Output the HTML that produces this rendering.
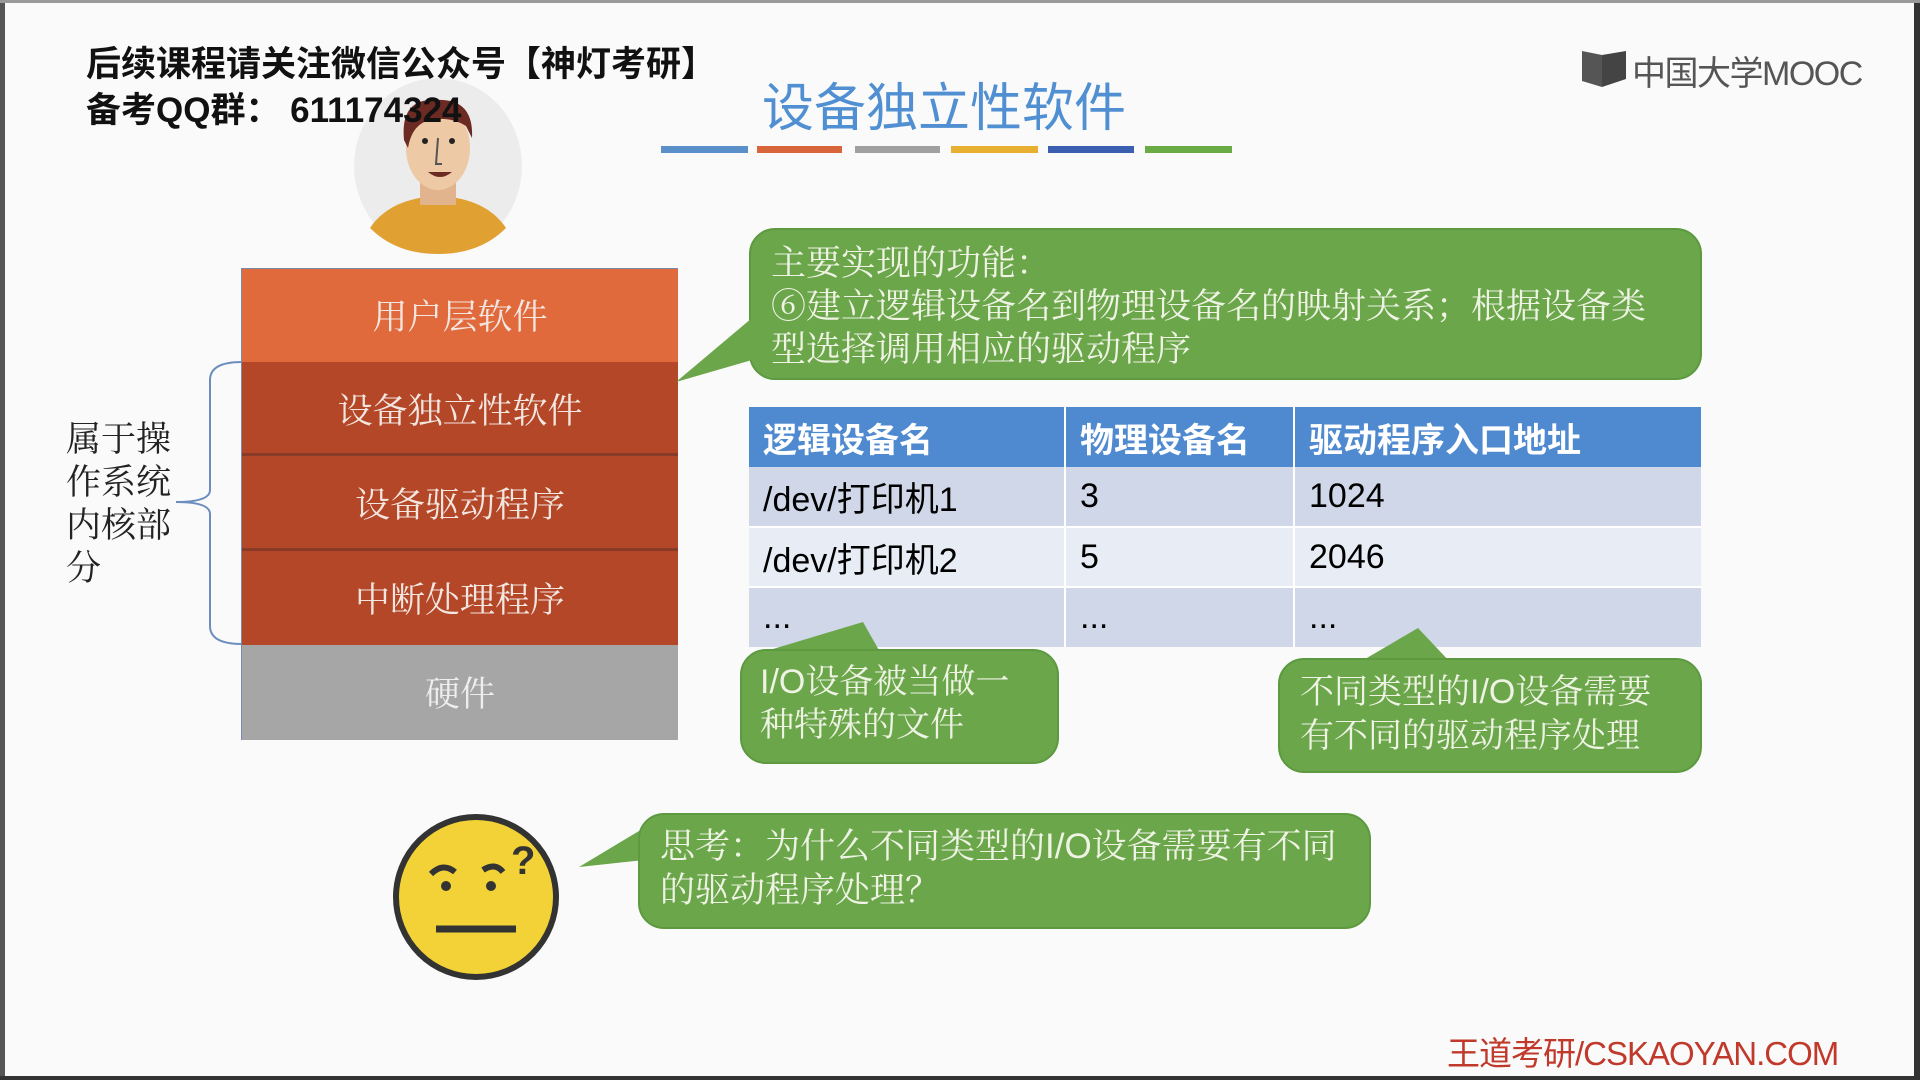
<!DOCTYPE html>
<html><head><meta charset="utf-8"><style>
*{margin:0;padding:0;box-sizing:border-box}
body{width:1920px;height:1080px;overflow:hidden;background:#fafafa;position:relative;font-family:"Liberation Sans","Noto Sans CJK SC",sans-serif}
.a{position:absolute}
.hd{left:86px;font-size:35px;font-weight:bold;color:#111;white-space:nowrap}
.row{position:absolute;left:0;width:436px;color:#f3e6e0;font-size:35px;text-align:center;font-family:"Noto Serif CJK SC","Noto Sans CJK SC",serif}
.g{background:#6ba64a;border-radius:26px;color:#eef3e4;font-family:"Liberation Sans","Noto Serif CJK SC",serif;border:2px solid #5c9940}
table{border-collapse:collapse;font-size:34px}
td{padding-left:14px;height:60px}
</style></head><body>
<div class="a" style="left:0;top:0;width:5px;height:1080px;background:#555"></div>
<div class="a" style="right:0;top:0;width:6px;height:1080px;background:#333"></div>
<div class="a" style="left:0;top:0;width:1920px;height:3px;background:#999"></div>
<div class="a" style="left:0;bottom:0;width:1920px;height:4px;background:#333"></div>

<svg class="a" style="left:350px;top:78px" width="176" height="176" viewBox="0 0 176 176">
<ellipse cx="88" cy="88" rx="84" ry="88" fill="#ececec"/>
<path d="M20 150 Q40 120 88 118 Q136 120 156 150 Q130 176 88 176 Q46 176 20 150Z" fill="#e0a132"/>
<rect x="70" y="95" width="36" height="32" fill="#e2b48e"/>
<ellipse cx="88" cy="70" rx="32" ry="42" fill="#eec9a5"/>
<path d="M54 62 Q50 20 86 22 Q124 20 122 60 L116 48 Q100 38 80 42 Q62 46 58 70Z" fill="#6b2a22"/>
<circle cx="75" cy="63" r="3" fill="#222"/><circle cx="102" cy="63" r="3" fill="#222"/>
<path d="M88 60 L86 86 L92 86" stroke="#555" fill="none" stroke-width="2"/>
<path d="M78 94 Q90 104 102 94 Z" fill="#6b2a22"/>
</svg>

<div class="a hd" style="top:36px">后续课程请关注微信公众号【神灯考研】</div>
<div class="a hd" style="top:82px">备考QQ群：&nbsp;611174324</div>

<div class="a" style="left:762px;top:66px;font-size:52px;color:#4f8fd2;white-space:nowrap">设备独立性软件</div>
<div class="a" style="left:661px;top:146px;width:87px;height:7px;background:#5b8fc9"></div>
<div class="a" style="left:757px;top:146px;width:85px;height:7px;background:#d9663a"></div>
<div class="a" style="left:855px;top:146px;width:85px;height:7px;background:#a0a0a0"></div>
<div class="a" style="left:951px;top:146px;width:87px;height:7px;background:#e8b030"></div>
<div class="a" style="left:1048px;top:146px;width:86px;height:7px;background:#3a5fb0"></div>
<div class="a" style="left:1145px;top:146px;width:87px;height:7px;background:#6aab45"></div>

<div class="a" style="left:1580px;top:47px;width:50px;height:38px">
<svg width="50" height="42"><path d="M2 4 L22 8 L22 40 L2 34Z" fill="#555"/><path d="M22 8 L46 4 L46 32 L22 40Z" fill="#444"/></svg></div>
<div class="a" style="left:1632px;top:46px;font-size:34px;color:#555;white-space:nowrap;letter-spacing:-1.5px">中国大学MOOC</div>

<div class="a" style="left:241px;top:268px;width:437px;height:472px;border:1px solid #7a8aa8">
<div class="row" style="top:0;height:93px;line-height:93px;background:#e06a3c">用户层软件</div>
<div class="row" style="top:93px;height:94px;line-height:94px;background:#b34727;border-bottom:3px solid #8a3a28">设备独立性软件</div>
<div class="row" style="top:187px;height:95px;line-height:95px;background:#b34727;border-bottom:3px solid #8a3a28">设备驱动程序</div>
<div class="row" style="top:282px;height:94px;line-height:94px;background:#b34727">中断处理程序</div>
<div class="row" style="top:376px;height:95px;line-height:95px;background:#a6a6a6;color:#eee">硬件</div>
</div>
<svg class="a" style="left:170px;top:360px" width="75" height="286"><path d="M72 2 Q40 2 40 20 L40 130 Q40 142 6 142 Q40 142 40 154 L40 266 Q40 284 72 284" stroke="#6c8ebf" stroke-width="2" fill="none"/></svg>
<div class="a" style="left:66px;top:416px;font-size:35px;line-height:43px;color:#222;font-family:'Noto Serif CJK SC',serif">属于操<br>作系统<br>内核部<br>分</div>

<div class="a g" style="left:749px;top:228px;width:953px;height:152px;padding:12px 20px;font-size:35px;line-height:43px">主要实现的功能：<br>⑥建立逻辑设备名到物理设备名的映射关系；根据设备类型选择调用相应的驱动程序</div>

<table class="a" style="left:749px;top:407px;width:952px">
<tr style="background:#4f8ad0;color:#fff;font-weight:bold;height:52px"><td style="width:316px;border-right:2px solid #fff">逻辑设备名</td><td style="width:229px;border-right:2px solid #fff">物理设备名</td><td>驱动程序入口地址</td></tr>
<tr style="background:#cfd7e8;border-bottom:2px solid #fff"><td style="border-right:2px solid #fff">/dev/打印机1</td><td style="border-right:2px solid #fff">3</td><td>1024</td></tr>
<tr style="background:#e8ecf4;border-bottom:2px solid #fff"><td style="border-right:2px solid #fff">/dev/打印机2</td><td style="border-right:2px solid #fff">5</td><td>2046</td></tr>
<tr style="background:#cfd7e8;height:57px"><td style="border-right:2px solid #fff">...</td><td style="border-right:2px solid #fff">...</td><td>...</td></tr>
</table>

<svg class="a" style="left:0;top:0" width="1920" height="1080">
<path d="M676 382 L752 318 L752 360 Z" fill="#6ba64a"/>
<path d="M863 622 L763 652 L880 652 Z" fill="#6ba64a"/>
<path d="M1418 628 L1360 662 L1450 662 Z" fill="#6ba64a"/>
<path d="M579 867 L644 828 L644 860 Z" fill="#6ba64a"/>
</svg>

<div class="a g" style="left:740px;top:649px;width:319px;height:115px;padding:10px 18px;font-size:34px;line-height:43px">I/O设备被当做一种特殊的文件</div>
<div class="a g" style="left:1278px;top:658px;width:424px;height:115px;padding:10px 20px;font-size:34px;line-height:44px">不同类型的I/O设备需要有不同的驱动程序处理</div>

<svg class="a" style="left:391px;top:812px" width="170" height="170" viewBox="0 0 170 170">
<circle cx="85" cy="85" r="80" fill="#f2d236" stroke="#333" stroke-width="6"/>
<path d="M40 62 Q52 50 64 60" stroke="#333" stroke-width="6" fill="none"/>
<circle cx="55" cy="74" r="5" fill="#333"/><circle cx="100" cy="74" r="5" fill="#333"/>
<path d="M92 58 Q104 50 112 60" stroke="#333" stroke-width="6" fill="none"/>
<text x="120" y="62" font-size="40" font-weight="bold" fill="#333" font-family="Liberation Sans">?</text>
<path d="M45 117 L125 117" stroke="#333" stroke-width="7"/>
</svg>

<div class="a g" style="left:638px;top:813px;width:733px;height:116px;padding:10px 20px;font-size:35px;line-height:44px">思考：为什么不同类型的I/O设备需要有不同的驱动程序处理？</div>

<div class="a" style="left:1447px;top:1027px;font-size:33px;color:#c0392b;white-space:nowrap;letter-spacing:-1px">王道考研/CSKAOYAN.COM</div>
</body></html>
